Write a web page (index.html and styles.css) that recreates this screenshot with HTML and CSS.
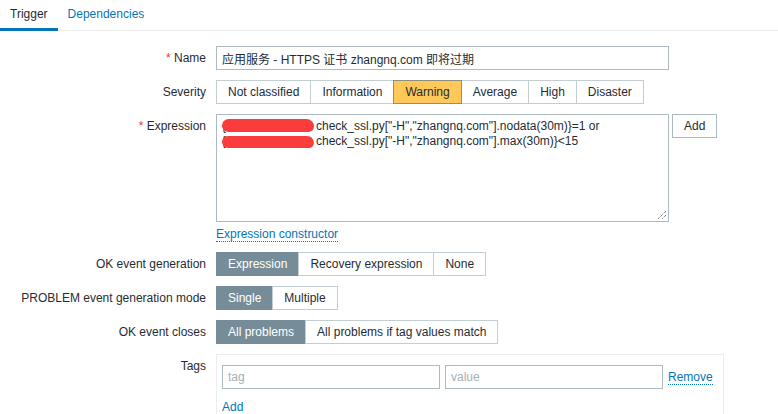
FILE: index.html
```html
<!DOCTYPE html>
<html lang="en">
<head>
<meta charset="utf-8">
<title>Trigger</title>
<link rel="stylesheet" href="styles.css">
</head>
<body>
<nav class="tabs">
  <a class="tab tab-active">Trigger</a>
  <a class="tab">Dependencies</a>
</nav>
<form class="form">
  <div class="lbl"><span class="req">*</span> Name</div>
  <div class="ctl"><input class="input input-std" type="text" value="应用服务 - HTTPS 证书 zhangnq.com 即将过期"></div>

  <div class="lbl">Severity</div>
  <div class="ctl">
    <div class="seg">
      <span class="seg-btn">Not classified</span>
      <span class="seg-btn">Information</span>
      <span class="seg-btn seg-warning">Warning</span>
      <span class="seg-btn">Average</span>
      <span class="seg-btn">High</span>
      <span class="seg-btn">Disaster</span>
    </div>
  </div>

  <div class="lbl"><span class="req">*</span> Expression</div>
  <div class="ctl">
    <div class="expr-row">
      <div class="textarea">
        <div class="line">{<span class="redact"></span>check_ssl.py["-H","zhangnq.com"].nodata(30m)}=1 or</div>
        <div class="line">{<span class="redact redact-2"></span>check_ssl.py["-H","zhangnq.com"].max(30m)}&lt;15</div>
        <svg class="grip" width="10" height="10" viewBox="0 0 10 10"><path d="M9 1 L1 9 M9 5 L5 9" stroke="#555" stroke-width="1" stroke-dasharray="1 1"/></svg>
      </div>
      <button class="btn" type="button">Add</button>
    </div>
    <a class="link link-under">Expression constructor</a>
  </div>

  <div class="lbl">OK event generation</div>
  <div class="ctl">
    <div class="seg">
      <span class="seg-btn seg-on">Expression</span>
      <span class="seg-btn">Recovery expression</span>
      <span class="seg-btn">None</span>
    </div>
  </div>

  <div class="lbl">PROBLEM event generation mode</div>
  <div class="ctl">
    <div class="seg">
      <span class="seg-btn seg-on">Single</span>
      <span class="seg-btn">Multiple</span>
    </div>
  </div>

  <div class="lbl">OK event closes</div>
  <div class="ctl">
    <div class="seg">
      <span class="seg-btn seg-on">All problems</span>
      <span class="seg-btn">All problems if tag values match</span>
    </div>
  </div>

  <div class="lbl">Tags</div>
  <div class="ctl">
    <div class="tags-box">
      <div class="tag-row">
        <input class="input input-tag" type="text" placeholder="tag">
        <input class="input input-tag" type="text" placeholder="value">
        <a class="link link-under">Remove</a>
      </div>
      <a class="link add-link">Add</a>
    </div>
  </div>
</form>
</body>
</html>
```
FILE: styles.css
```css
* { box-sizing: border-box; }

body {
  margin: 0;
  background: #ffffff;
  color: #1f2c33;
  font: 12px "Liberation Sans", "Noto Sans CJK SC", Arial, sans-serif;
}

.tabs {
  display: flex;
  border-bottom: 1px solid #ebebeb;
  height: 31px;
}

.tab {
  display: block;
  padding: 1px 10px 0;
  line-height: 27px;
  color: #0275b8;
  height: 31px;
}

.tab-active {
  color: #1f2c33;
  border-bottom: 3px solid #0275b8;
}

.form {
  display: grid;
  grid-template-columns: 206px 1fr;
  column-gap: 10px;
  row-gap: 10px;
  padding-top: 15px;
}

.lbl {
  text-align: right;
  line-height: 24px;
  white-space: nowrap;
}

.req {
  color: #e33734;
}

.ctl {
  display: flex;
  flex-direction: column;
  align-items: flex-start;
}

.input {
  height: 24px;
  border: 1px solid #acbbc2;
  padding: 0 5px;
  font: 12px "Liberation Sans", "Noto Sans CJK SC", Arial, sans-serif;
  color: #1f2c33;
  background: #fff;
  outline: none;
}

.input::placeholder {
  color: #a5b0b5;
}

.input-std {
  width: 453px;
}

.input-tag {
  width: 218px;
}

.seg {
  display: flex;
}

.seg-btn {
  display: block;
  height: 24px;
  line-height: 22px;
  padding: 0 11px;
  border: 1px solid #c3ced3;
  margin-left: -1px;
  background: #fff;
  white-space: nowrap;
}

.seg-btn:first-child {
  margin-left: 0;
}

.seg-on {
  background: #768d99;
  border-color: #768d99;
  color: #ffffff;
}

.seg-warning {
  background: #ffc859;
  border-color: #8f8f7e;
  position: relative;
}

.expr-row {
  display: flex;
  align-items: flex-start;
  gap: 3px;
}

.textarea {
  position: relative;
  width: 453px;
  height: 108px;
  border: 1px solid #acbbc2;
  padding: 4px 5px;
  line-height: 15px;
  white-space: nowrap;
}

.line {
  height: 15px;
}

.redact {
  display: inline-block;
  width: 92px;
  height: 13px;
  margin: 0 2px 0 -4px;
  vertical-align: -2px;
  background: #fb3c3c;
  border-radius: 7px 8px 6px 7px;
}

.redact-2 {
  height: 12px;
  vertical-align: -3px;
}

.grip {
  position: absolute;
  right: 1px;
  bottom: 1px;
}

.btn {
  height: 24px;
  padding: 0 11px;
  border: 1px solid #acbbc2;
  background: #fff;
  color: #1f2c33;
  font: 12px "Liberation Sans", Arial, sans-serif;
}

.link {
  color: #0275b8;
  line-height: 14px;
}

.link-under {
  border-bottom: 1px dotted #0275b8;
}

.ctl > .link {
  margin-top: 5px;
}

.tags-box {
  width: 508px;
  border: 1px solid #ebeef0;
  border-bottom: none;
  padding: 10px 10px 0 5px;
  display: flex;
  flex-direction: column;
  align-items: flex-start;
}

.tag-row {
  display: flex;
  align-items: center;
  gap: 5px;
}

.add-link {
  margin-top: 10px;
  line-height: 16px;
}
```
